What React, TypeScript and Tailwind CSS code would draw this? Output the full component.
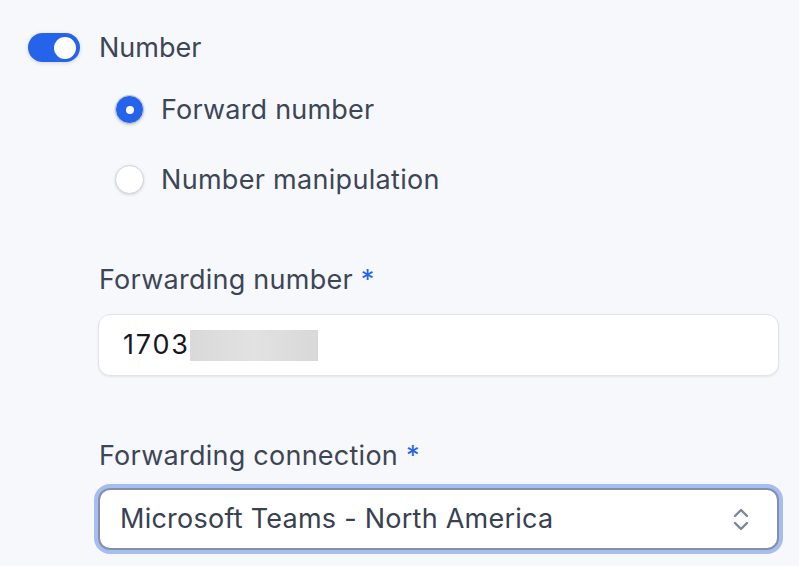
import React from "react";

function Radio({ checked }: { checked: boolean }) {
  return checked ? (
    <div className="w-[29px] h-[29px] rounded-full bg-[#2563eb] border border-[#c9ced8] shadow-[0_1px_3px_rgba(0,0,0,0.18)] flex items-center justify-center shrink-0">
      <div className="w-[8px] h-[8px] rounded-full bg-white" />
    </div>
  ) : (
    <div className="w-[29px] h-[29px] rounded-full bg-white border border-[#cfd3da] shadow-[0_1px_3px_rgba(0,0,0,0.14)] shrink-0" />
  );
}

export default function App() {
  return (
    <div className="w-[799px] h-[566px] overflow-hidden bg-[#f7f8fc] font-['Inter',sans-serif] text-[#3d4656] pl-[28px] pt-[33px]">
      <div className="flex items-center gap-[19px] h-[29px]">
        <div className="w-[52px] h-[29px] rounded-full bg-[#2563eb] shadow-[0_1px_4px_rgba(0,0,0,0.15)] flex items-center justify-end pr-[4px] shrink-0">
          <div className="w-[22px] h-[22px] rounded-full bg-white" />
        </div>
        <span className="text-[27px] leading-[29px]">Number</span>
      </div>

      <div className="pl-[87px]">
        <div className="mt-[33px] flex items-center gap-[17px] h-[29px]">
          <Radio checked />
          <span className="text-[27px] leading-[29px] tracking-[0.2px]">Forward number</span>
        </div>
        <div className="mt-[41px] flex items-center gap-[17px] h-[29px]">
          <Radio checked={false} />
          <span className="text-[27px] leading-[29px] tracking-[0.3px]">Number manipulation</span>
        </div>
      </div>

      <div className="pl-[70px] pr-[20px]">
        <div className="mt-[69px] text-[27px] leading-[34px] pl-[1px] tracking-[0.25px]">
          Forwarding number <span className="text-[#2563eb]">*</span>
        </div>
        <div className="mt-[17px] h-[62px] bg-white border border-[#e1e4ea] rounded-[12px] shadow-[0_1px_2px_rgba(0,0,0,0.08)] flex items-center pl-[24px]">
          <span className="text-[27px] leading-[30px] text-[#15181f] tracking-[1.8px]">1703</span>
          <div className="w-[128px] h-[31px] bg-gradient-to-r from-[#d9d9d9] via-[#e2e2e2] to-[#d8d8d8]" />
        </div>

        <div className="mt-[63px] text-[27px] leading-[34px] pl-[1px] tracking-[0.25px]">
          Forwarding connection <span className="text-[#2563eb]">*</span>
        </div>
        <div className="mt-[15px] h-[62px] bg-white border-2 border-[#8590a8] rounded-[12px] ring-4 ring-[#a5bdf1] flex items-center justify-between pl-[20px] pr-[28px]">
          <span className="text-[27px] leading-[30px] text-[#374151] tracking-[0.25px]">Microsoft Teams - North America</span>
          <svg width="16" height="25" viewBox="0 0 16 25" fill="none" stroke="#7d8697" strokeWidth="2.4" strokeLinecap="round" strokeLinejoin="round">
            <path d="M2 9 L8 3 L14 9" />
            <path d="M2 16 L8 22 L14 16" />
          </svg>
        </div>
      </div>
    </div>
  );
}
